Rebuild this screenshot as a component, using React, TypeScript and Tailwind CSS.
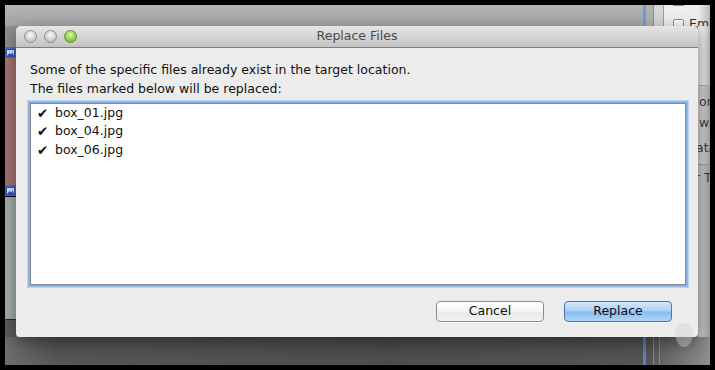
const font = { fontFamily: '"DejaVu Sans", "Liberation Sans", sans-serif' };

const files = ["box_01.jpg", "box_04.jpg", "box_06.jpg"];

const StripIcon = () => (
  <div className="h-[10px] w-[11px] shrink-0 bg-[#4a6fd6] flex items-center justify-center">
    <svg width="9" height="8" viewBox="0 0 9 8">
      <rect x="0.5" y="0.5" width="8" height="7" fill="#dbe4fb" stroke="#3556bd" />
      <path d="M1 7 L3.5 4 L5 5.5 L6.5 3.5 L8 7 Z" fill="#3556bd" />
    </svg>
  </div>
);

const Light = ({ green }: { green?: boolean }) => (
  <div
    className={
      green
        ? "w-[13px] h-[13px] rounded-full border border-[#5f9330] bg-[radial-gradient(circle_at_50%_35%,#dcf7b8,#8fd04c_55%,#5e9f24)]"
        : "w-[13px] h-[13px] rounded-full border border-[#8f8f8f] bg-[radial-gradient(circle_at_50%_35%,#fbfbfb,#d2d2d2_55%,#a9a9a9)]"
    }
  />
);

const Dialog = () => (
  <div className="absolute left-[11px] top-[21px] w-[682px] h-[311px] flex flex-col bg-[#ececec] rounded-t-[5px] rounded-b-[4px] overflow-hidden shadow-[0_6px_18px_rgba(0,0,0,0.45)]">
    <div className="h-[22px] shrink-0 grid grid-cols-[1fr_auto_1fr] items-center border-b border-[#7c7c7c] bg-[linear-gradient(#e6e6e6,#c3c3c3)]">
      <div className="flex items-center gap-[7px] pl-[8px]">
        <Light />
        <Light />
        <Light green />
      </div>
      <div className="text-[12.5px] text-[#4b4b4b]">Replace Files</div>
      <div />
    </div>
    <div className="flex flex-col pl-[14px] pr-[12px] pt-[12px] text-[12.5px] text-[#111]">
      <div className="leading-[19px]">
        <div>Some of the specific files already exist in the target location.</div>
        <div>The files marked below will be replaced:</div>
      </div>
      <div className="mt-[5px] w-[656px] h-[182px] border border-[#8b8b8b] bg-white shadow-[0_0_0_1px_#86aee2,0_0_0_2px_#8fb7e8,0_0_0_3px_#bcd5f2]">
        <ul className="flex flex-col pl-[6px]">
          {files.map((f) => (
            <li key={f} className="flex items-center h-[18.5px]">
              <span className="w-[18px] text-[13.5px] leading-none text-[#111]">✔</span>
              <span>{f}</span>
            </li>
          ))}
        </ul>
      </div>
      <div className="flex justify-end gap-[20px] pr-[14px] mt-[16px]">
        <button className="w-[108px] h-[21px] rounded-[4px] border border-[#8d8d8d] bg-[linear-gradient(#ffffff,#f4f4f4_50%,#e9e9e9_51%,#f2f2f2)] text-[12.5px] text-[#111] shadow-[0_1px_0_rgba(255,255,255,0.7)]">
          Cancel
        </button>
        <button className="w-[108px] h-[21px] rounded-[4px] border border-[#55729e] bg-[linear-gradient(#d2e7fc,#a9cff5_48%,#84bcf1_52%,#b0d6f9)] text-[12.5px] text-[#111] shadow-[0_1px_0_rgba(255,255,255,0.7)]">
          Replace
        </button>
      </div>
    </div>
  </div>
);

export default function App() {
  return (
    <div className="w-[715px] h-[370px] bg-black pt-[5px] pl-[5px]" style={font}>
      <div className="relative w-[705px] h-[360px] overflow-hidden">
        {/* top band */}
        <div className="flex h-[21px]">
          <div className="w-[638px] bg-[linear-gradient(#b3b3b3,#a5a5a5)]" />
          <div className="w-[3px] bg-[#6f9bd9]" />
          <div className="w-[7px] bg-[#b1b1b1]" />
          <div className="w-[1px] bg-[#8c8c8c]" />
          <div className="w-[9px] bg-[#d6d6d6]" />
          <div className="w-[1px] bg-[#9c9c9c]" />
          <div className="w-[46px] bg-[linear-gradient(to_right,#ededed_75%,#b9b9b9)] flex flex-col pl-[9px]">
            <div className="w-[11px] h-[3px] border-x border-b border-[#8e8e8e] rounded-b-[2px] bg-white" />
            <div className="flex items-center gap-[5px] mt-[9px]">
              <div className="w-[11px] h-[11px] shrink-0 border border-[#8e8e8e] rounded-[2px] bg-[linear-gradient(#ffffff,#ececec)]" />
              <span className="text-[12.5px] text-[#333] whitespace-nowrap">Emb</span>
            </div>
          </div>
        </div>
        {/* middle band */}
        <div className="flex h-[311px]">
          <div className="w-[11px] flex flex-col">
            <div className="h-[21px] bg-[#8f8f8f]" />
            <div className="h-[1px] bg-[#8a6a3c]" />
            <StripIcon />
            <div className="h-[127px] bg-[#a67472]" />
            <div className="h-[1px] bg-[#8a6a3c]" />
            <div className="h-[11px] flex">
              <StripIcon />
            </div>
            <div className="h-[122px] bg-[#a3b1ad]" />
            <div className="h-[1px] bg-[#1e2c5e]" />
            <div className="h-[17px] bg-[#5c5c5c]" />
          </div>
          <div className="w-[682px] bg-[#888]" />
          <div className="w-[12px] flex flex-col text-[12.5px] text-[#3c3c3c] whitespace-nowrap overflow-hidden">
            <div className="h-[59px] bg-[linear-gradient(to_right,#e8e8e8_50%,#b4b4b4)]" />
            <div className="h-[1px] bg-[#b2b2b2]" />
            <div className="flex flex-col bg-[linear-gradient(to_right,#d4d4d4_40%,#a3a3a3)] h-[78px] leading-[16px]">
              <span className="mt-[8px] ml-[1px]">on</span>
              <span className="mt-[5px] ml-[1px]">w:</span>
              <span className="mt-[9px] -ml-[2px]">ata</span>
            </div>
            <div className="h-[1px] bg-[#9e9e9e]" />
            <div className="flex flex-col bg-[linear-gradient(to_right,#c8c8c8_40%,#9c9c9c)] h-[172px] leading-[16px]">
              <span className="mt-[5px] -ml-[3px]">r T</span>
            </div>
          </div>
        </div>
        {/* bottom band */}
        <div className="flex h-[28px]">
          <div className="w-[638px] bg-[linear-gradient(to_right,#6e6e6e,#565656_8%,#4e4e4e_60%,#545454)]" />
          <div className="w-[3px] bg-[#5c82c2]" />
          <div className="w-[7px] bg-[#555]" />
          <div className="w-[1px] bg-[#8a8a8a]" />
          <div className="w-[5px] bg-[#5e5e5e]" />
          <div className="w-[1px] bg-[#8a8a8a]" />
          <div className="w-[50px] bg-[linear-gradient(to_right,#626262,#8e8e8e)]" />
        </div>
        <Dialog />
        <div className="absolute left-[670px] top-[318px] w-[18px] h-[24px] rounded-[50%_50%_50%_50%/40%_40%_60%_60%] bg-[rgba(207,207,207,0.42)]" />
      </div>
    </div>
  );
}
